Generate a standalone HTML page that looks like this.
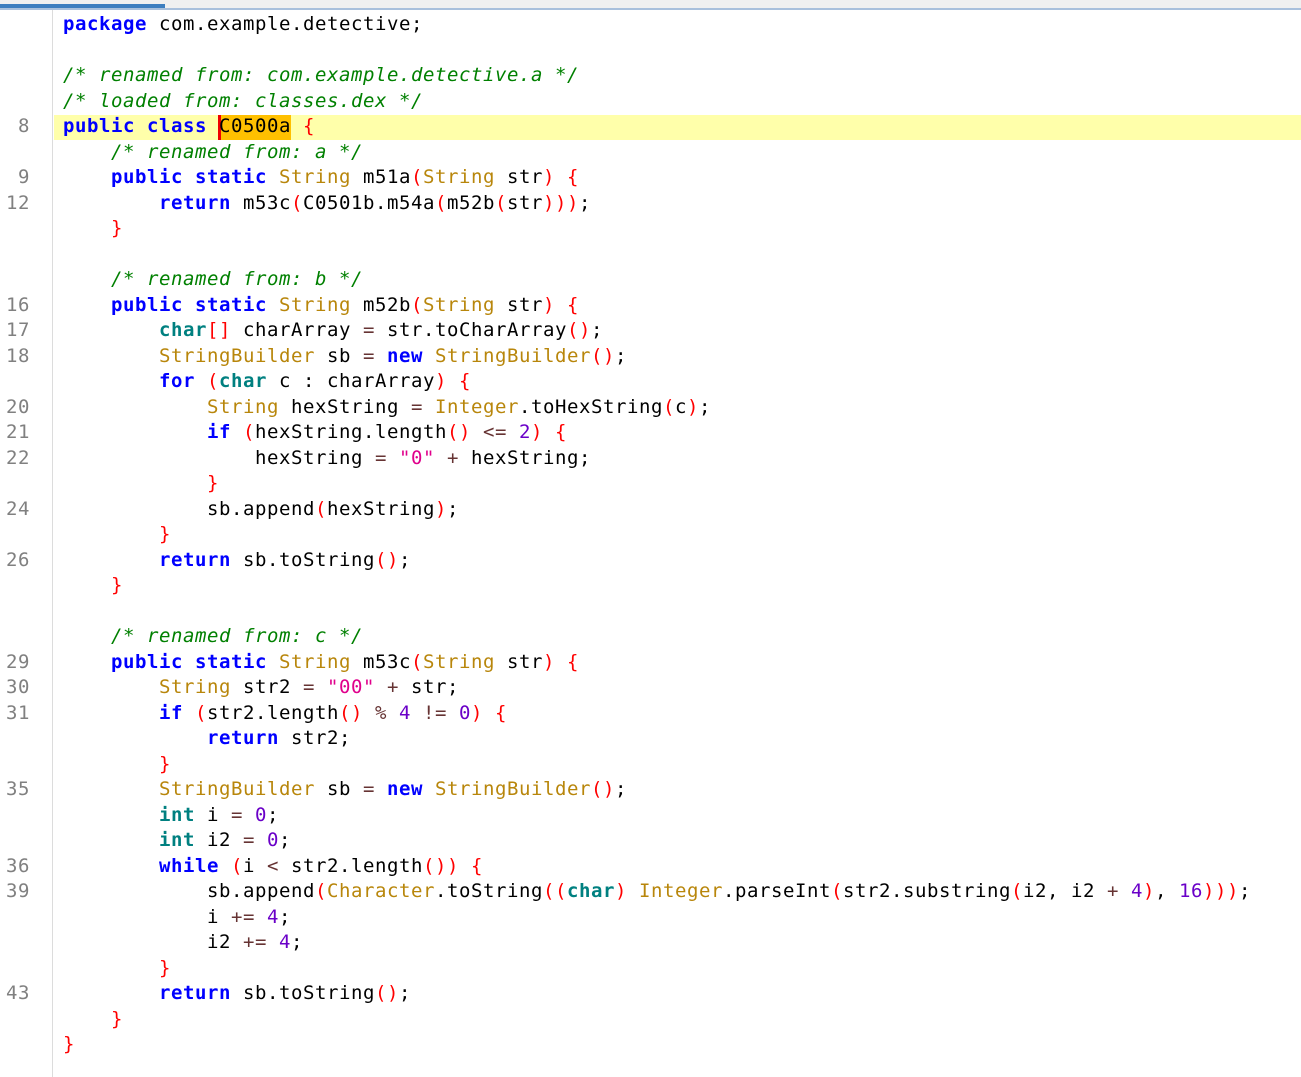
<!DOCTYPE html>
<html><head><meta charset="utf-8">
<style>
html,body{margin:0;padding:0;background:#fff;width:1301px;height:1077px;overflow:hidden}
#top{position:absolute;left:0;top:0;width:1301px;height:8px;background:#f0f0f0}
#blue{position:absolute;left:0;top:4px;width:165px;height:4px;background:#3d7ebf}
#line{position:absolute;left:0;top:8px;width:1301px;height:2px;background:#a9c0dc}
#gb{position:absolute;left:52px;top:10px;width:1px;height:1067px;background:#dcdcdc}
#hl{position:absolute;left:54px;top:115px;width:1247px;height:25px;background:#ffffaa}
#or{position:absolute;left:220px;top:115px;width:71px;height:25px;background:#ffc000}
#bar{position:absolute;left:218px;top:115px;width:3px;height:25px;background:#f00000}
pre{position:absolute;margin:0;top:12px;font:19px/25.5px "DejaVu Sans Mono","Liberation Mono",monospace;letter-spacing:.56px;color:#000;white-space:pre}
#g{left:0;width:30px;text-align:right;color:#808080}
#c{left:63px}
.k{color:#0000ff;font-weight:bold}
.t{color:#b8860b}
.p{color:#008080;font-weight:bold}
.m{font-style:italic;color:#008000}
.r{color:#ff0000}
.n{color:#6a00c8}
.s{color:#e0008c}
.o{color:#663333}
</style></head><body>
<div id="top"></div><div id="blue"></div><div id="line"></div><div id="gb"></div><div id="hl"></div><div id="or"></div><div id="bar"></div>
<pre id="g">




8

9
12



16
17
18

20
21
22

24

26



29
30
31


35


36
39



43</pre>
<pre id="c"><span class="k">package</span> com.example.detective;

<span class="m">/* renamed from: com.example.detective.a */</span>
<span class="m">/* loaded from: classes.dex */</span>
<span class="k">public class</span> C0500a <span class="r">{</span>
    <span class="m">/* renamed from: a */</span>
    <span class="k">public static</span> <span class="t">String</span> m51a<span class="r">(</span><span class="t">String</span> str<span class="r">)</span> <span class="r">{</span>
        <span class="k">return</span> m53c<span class="r">(</span>C0501b.m54a<span class="r">(</span>m52b<span class="r">(</span>str<span class="r">)))</span>;
    <span class="r">}</span>

    <span class="m">/* renamed from: b */</span>
    <span class="k">public static</span> <span class="t">String</span> m52b<span class="r">(</span><span class="t">String</span> str<span class="r">)</span> <span class="r">{</span>
        <span class="p">char</span><span class="r">[]</span> charArray <span class="o">=</span> str.toCharArray<span class="r">()</span>;
        <span class="t">StringBuilder</span> sb <span class="o">=</span> <span class="k">new</span> <span class="t">StringBuilder</span><span class="r">()</span>;
        <span class="k">for</span> <span class="r">(</span><span class="p">char</span> c : charArray<span class="r">)</span> <span class="r">{</span>
            <span class="t">String</span> hexString <span class="o">=</span> <span class="t">Integer</span>.toHexString<span class="r">(</span>c<span class="r">)</span>;
            <span class="k">if</span> <span class="r">(</span>hexString.length<span class="r">()</span> <span class="o">&lt;=</span> <span class="n">2</span><span class="r">)</span> <span class="r">{</span>
                hexString <span class="o">=</span> <span class="s">"0"</span> <span class="o">+</span> hexString;
            <span class="r">}</span>
            sb.append<span class="r">(</span>hexString<span class="r">)</span>;
        <span class="r">}</span>
        <span class="k">return</span> sb.toString<span class="r">()</span>;
    <span class="r">}</span>

    <span class="m">/* renamed from: c */</span>
    <span class="k">public static</span> <span class="t">String</span> m53c<span class="r">(</span><span class="t">String</span> str<span class="r">)</span> <span class="r">{</span>
        <span class="t">String</span> str2 <span class="o">=</span> <span class="s">"00"</span> <span class="o">+</span> str;
        <span class="k">if</span> <span class="r">(</span>str2.length<span class="r">()</span> <span class="o">%</span> <span class="n">4</span> <span class="o">!=</span> <span class="n">0</span><span class="r">)</span> <span class="r">{</span>
            <span class="k">return</span> str2;
        <span class="r">}</span>
        <span class="t">StringBuilder</span> sb <span class="o">=</span> <span class="k">new</span> <span class="t">StringBuilder</span><span class="r">()</span>;
        <span class="p">int</span> i <span class="o">=</span> <span class="n">0</span>;
        <span class="p">int</span> i2 <span class="o">=</span> <span class="n">0</span>;
        <span class="k">while</span> <span class="r">(</span>i <span class="o">&lt;</span> str2.length<span class="r">())</span> <span class="r">{</span>
            sb.append<span class="r">(</span><span class="t">Character</span>.toString<span class="r">((</span><span class="p">char</span><span class="r">)</span> <span class="t">Integer</span>.parseInt<span class="r">(</span>str2.substring<span class="r">(</span>i2, i2 <span class="o">+</span> <span class="n">4</span><span class="r">)</span>, <span class="n">16</span><span class="r">)))</span>;
            i <span class="o">+=</span> <span class="n">4</span>;
            i2 <span class="o">+=</span> <span class="n">4</span>;
        <span class="r">}</span>
        <span class="k">return</span> sb.toString<span class="r">()</span>;
    <span class="r">}</span>
<span class="r">}</span></pre>
</body></html>
